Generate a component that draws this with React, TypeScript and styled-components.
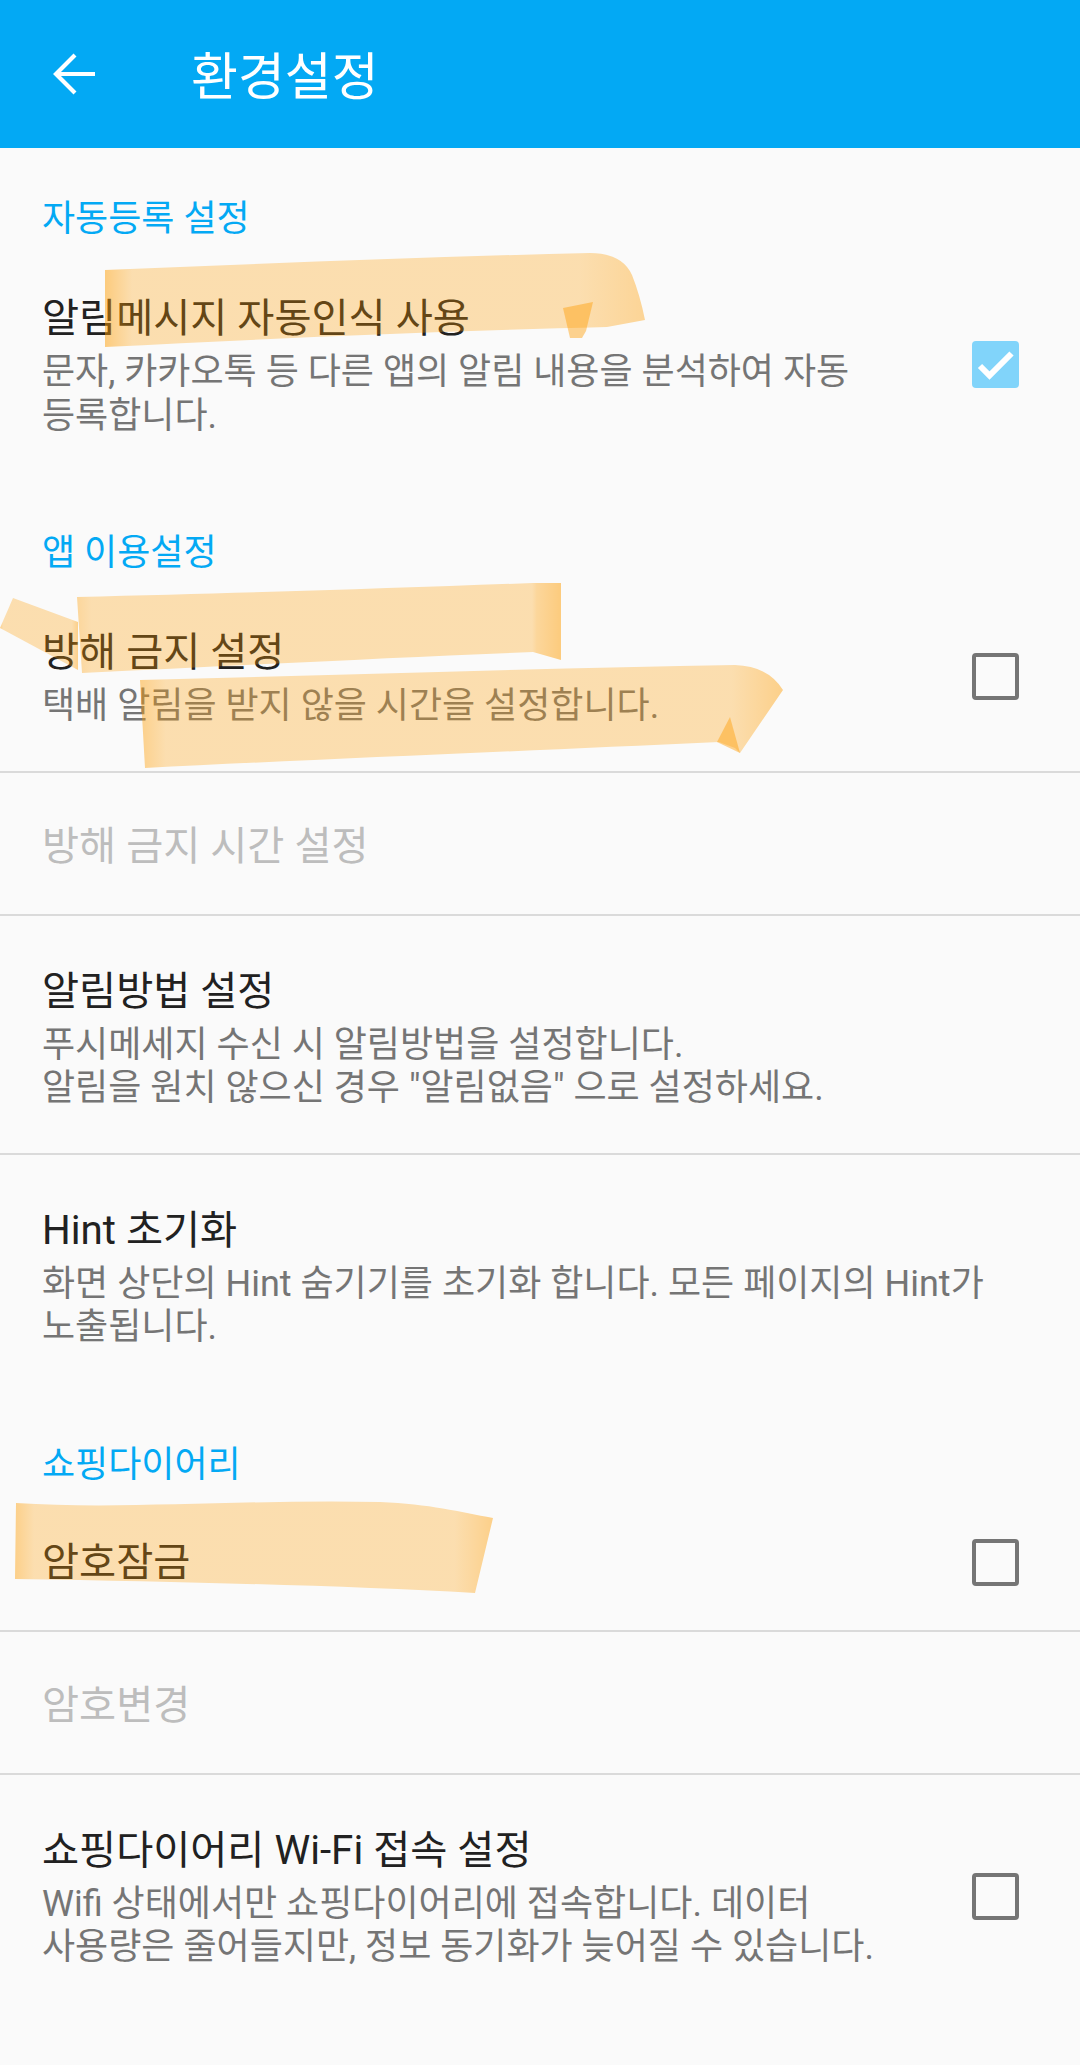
import React from 'react';
import styled, {createGlobalStyle} from 'styled-components';

const GlobalStyle = createGlobalStyle`
    html, body {
        margin:0;
        padding:0;
        background:#fafafa;
    }
    body {
        font-family: Roboto, "Noto Sans CJK KR", sans-serif;
    }
`

const Page = styled.div`
    position:relative;
    width:1080px;
    min-height:2065px;
    background:#fafafa;
    overflow:hidden;
`

const Toolbar = styled.header`
    display:flex;
    align-items:center;
    gap:96px;
    height:148px;
    padding-left:53px;
    box-sizing:border-box;
    background:#03a9f4;
`

const BackButton = styled.button`
    display:flex;
    padding:0;
    border:none;
    background:none;
    cursor:pointer;
`

const Title = styled.h1`
    margin:0;
    padding-top:8px;
    color:#fff;
    font-size:51px;
    font-weight:400;
    line-height:60px;
`

const Category = styled.div`
    padding:49px 42px 2px;
    color:#03a9f4;
    font-size:36px;
    line-height:44px;
`

const Row = styled.div<{ $compact: boolean; $divider: boolean }>`
    display:flex;
    align-items:center;
    padding:${p => p.$compact ? '46px 61px 39px 42px' : '48px 61px 42px 42px'};
    border-bottom:2px solid ${p => p.$divider ? '#dadada' : 'transparent'};
`

const Texts = styled.div`
    flex:1 1;
    min-width:0;
`

const ItemTitle = styled.div<{ $disabled?: boolean }>`
    color:${p => p.$disabled ? '#bdbdbd' : '#212121'};
    font-size:40.3px;
    line-height:56px;
    white-space:nowrap;
`

const Summary = styled.div`
    margin-top:4px;
    color:#757575;
    font-size:36px;
    line-height:43.5px;
    white-space:nowrap;
`

const Box = styled.div<{ $checked: boolean }>`
    flex:none;
    display:flex;
    align-items:center;
    justify-content:center;
    width:47px;
    height:47px;
    box-sizing:border-box;
    border-radius:4px;
    background:${p => p.$checked ? '#81d4fa' : 'transparent'};
    border:${p => p.$checked ? 'none' : '4.5px solid #757575'};
`

const Overlay = styled.svg`
    position:absolute;
    top:0;
    left:0;
    pointer-events:none;
`

type Item = {
    title: string
    desc?: string[]
    check?: 'on' | 'off'
    disabled?: boolean
}

type Section = {
    title: string
    items: Item[]
}

const sections: Section[] = [
    {
        title: '자동등록 설정',
        items: [
            {
                title: '알림메시지 자동인식 사용',
                desc: ['문자, 카카오톡 등 다른 앱의 알림 내용을 분석하여 자동', '등록합니다.'],
                check: 'on'
            },
        ]
    },
    {
        title: '앱 이용설정',
        items: [
            {title: '방해 금지 설정', desc: ['택배 알림을 받지 않을 시간을 설정합니다.'], check: 'off'},
            {title: '방해 금지 시간 설정', disabled: true},
            {
                title: '알림방법 설정',
                desc: ['푸시메세지 수신 시 알림방법을 설정합니다.', '알림을 원치 않으신 경우 "알림없음" 으로 설정하세요.']
            },
            {
                title: 'Hint 초기화',
                desc: ['화면 상단의 Hint 숨기기를 초기화 합니다. 모든 페이지의 Hint가', '노출됩니다.']
            },
        ]
    },
    {
        title: '쇼핑다이어리',
        items: [
            {title: '암호잠금', check: 'off'},
            {title: '암호변경', disabled: true},
            {
                title: '쇼핑다이어리 Wi-Fi 접속 설정',
                desc: ['Wifi 상태에서만 쇼핑다이어리에 접속합니다. 데이터', '사용량은 줄어들지만, 정보 동기화가 늦어질 수 있습니다.'],
                check: 'off'
            },
        ]
    },
]

function BackArrow() {
    return (
        <svg width="42" height="42" viewBox="0 0 42 42">
            <path d="M42 21H3M22 2L3 21l19 19" fill="none" stroke="#fff" strokeWidth="4.2"/>
        </svg>
    )
}

function CheckBox({checked}: { checked: boolean }) {
    return (
        <Box $checked={checked}>
            {checked && <svg width="47" height="47" viewBox="0 0 47 47">
                <polyline points="8,25 17.5,34.5 39.5,12.5" fill="none" stroke="#fff" strokeWidth="6"/>
            </svg>}
        </Box>
    )
}

// marker strokes painted over the screenshot
function Highlights() {
    return (
        <Overlay width="1080" height="2065" viewBox="0 0 1080 2065">
            <defs>
                <linearGradient id="hlA" x1="0" x2="1" y1="0" y2="0">
                    <stop offset="0" stopColor="#ff9c00" stopOpacity="0.5"/>
                    <stop offset="0.05" stopColor="#ff9c00" stopOpacity="0.3"/>
                    <stop offset="0.88" stopColor="#ff9c00" stopOpacity="0.3"/>
                    <stop offset="1" stopColor="#ff9c00" stopOpacity="0.4"/>
                </linearGradient>
                <linearGradient id="hlB" x1="0" x2="1" y1="0" y2="0">
                    <stop offset="0" stopColor="#ff9c00" stopOpacity="0.38"/>
                    <stop offset="0.03" stopColor="#ff9c00" stopOpacity="0.3"/>
                    <stop offset="0.94" stopColor="#ff9c00" stopOpacity="0.3"/>
                    <stop offset="0.95" stopColor="#ff9c00" stopOpacity="0.38"/>
                    <stop offset="1" stopColor="#ff9c00" stopOpacity="0.5"/>
                </linearGradient>
                <linearGradient id="hlC" x1="0" x2="1" y1="0" y2="0">
                    <stop offset="0" stopColor="#ff9c00" stopOpacity="0.45"/>
                    <stop offset="0.04" stopColor="#ff9c00" stopOpacity="0.3"/>
                    <stop offset="0.92" stopColor="#ff9c00" stopOpacity="0.3"/>
                    <stop offset="1" stopColor="#ff9c00" stopOpacity="0.45"/>
                </linearGradient>
            </defs>
            <path d="M105 270 C260 264 420 257 590 253 Q622 253 632 275 Q640 295 645 320 L607 327 C450 331 280 338 105 347 Z"
                  fill="url(#hlA)"/>
            <path d="M563 308 L593 302 L586 331 L582 338 L570 338 Z" fill="#ff9c00" fillOpacity="0.43"/>
            <path d="M13 598 L78 622 L78 670 L0 628 Z" fill="url(#hlC)"/>
            <path d="M77 597 C250 593 400 588 533 583 L561 583 L561 660 L533 652 C400 657 250 665 82 673 Z"
                  fill="url(#hlB)"/>
            <path
                d="M140 680 C350 675 550 668 735 665 Q768 666 783 690 L740 753 L735 748 L719 742 C500 752 300 760 145 768 Z"
                fill="url(#hlC)"/>
            <path d="M717 742 L730 717 L740 753 Z" fill="#ff9c00" fillOpacity="0.43"/>
            <path
                d="M16 1503 C120 1510 250 1499 380 1502 C430 1504 460 1512 493 1518 L475 1593 C350 1586 200 1582 15 1579 Z"
                fill="url(#hlC)"/>
        </Overlay>
    )
}

function App() {
    return (
        <Page>
            <GlobalStyle/>
            <Toolbar>
                <BackButton aria-label="back"><BackArrow/></BackButton>
                <Title>환경설정</Title>
            </Toolbar>
            {sections.map(section => (
                <section key={section.title}>
                    <Category>{section.title}</Category>
                    {section.items.map((item, index) => (
                        <Row key={item.title}
                             $compact={!item.desc}
                             $divider={index < section.items.length - 1}>
                            <Texts>
                                <ItemTitle $disabled={item.disabled}>{item.title}</ItemTitle>
                                {item.desc && <Summary>
                                    {item.desc.map((line, i) => <React.Fragment key={i}>
                                        {i > 0 && <br/>}{line}
                                    </React.Fragment>)}
                                </Summary>}
                            </Texts>
                            {item.check && <CheckBox checked={item.check === 'on'}/>}
                        </Row>
                    ))}
                </section>
            ))}
            <Highlights/>
        </Page>
    );
}

export default App;
